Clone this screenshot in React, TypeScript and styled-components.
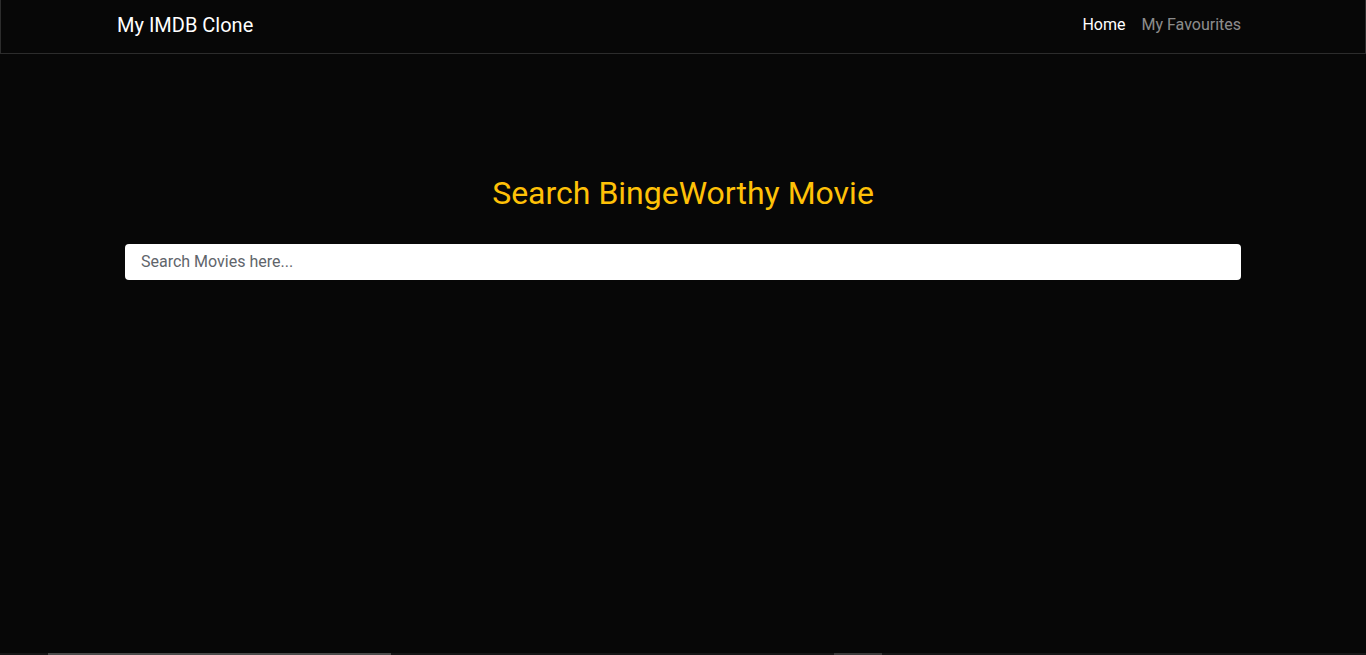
import React from "react";
import styled, { createGlobalStyle } from "styled-components";

const Global = createGlobalStyle`
  html, body { margin: 0; padding: 0; background: #070707; }
  body { font-family: Roboto, "Noto Sans", "Liberation Sans", sans-serif; color: #fff; }
  * { box-sizing: border-box; }
`;

const Page = styled.div`
  min-height: 655px;
  display: flex;
  flex-direction: column;
  background: #070707;
`;

const NavBar = styled.nav`
  height: 54px;
  border: 1px solid #2c2c2c;
  border-top: none;
  display: flex;
  align-items: center;
`;

const NavInner = styled.div`
  width: 1140px;
  margin: 0 auto;
  padding: 0 12px 4px 4px;
  display: flex;
  align-items: center;
  justify-content: space-between;
`;

const Brand = styled.a`
  font-size: 20px;
  color: #fff;
  text-decoration: none;
  line-height: 30px;
`;

const NavList = styled.div`
  display: flex;
  align-items: center;
  margin-right: -8px;
`;

const NavLink = styled.a<{ $active?: boolean }>`
  font-size: 16px;
  padding: 8px;
  line-height: 24px;
  color: ${(p) => (p.$active ? "#fff" : "rgba(255,255,255,0.55)")};
  text-decoration: none;
`;

const Main = styled.main`
  flex: 1;
  width: 1140px;
  margin: 0 auto;
  padding: 120px 12px 0;
  display: flex;
  flex-direction: column;
  align-items: center;
`;

const Title = styled.h1`
  margin: 0 0 32px;
  font-size: 32px;
  font-weight: 400;
  line-height: 1.2;
  color: #ffc107;
`;

const SearchInput = styled.input`
  width: 100%;
  height: 36px;
  border: none;
  border-radius: 4px;
  background: #fff;
  padding: 0 16px 1px;
  font-family: Roboto, "Noto Sans", sans-serif;
  font-size: 16px;
  color: #212529;
  outline: none;
  &::placeholder { color: #5f656b; }
`;

const Footer = styled.div`
  height: 2px;
  background: #161616;
  display: flex;
`;

const FooterSeg = styled.div<{ $w: number; $ml: number; $c: string }>`
  width: ${(p) => p.$w}px;
  margin-left: ${(p) => p.$ml}px;
  background: ${(p) => p.$c};
`;

export default function App() {
  return (
    <>
      <Global />
      <Page>
        <NavBar>
          <NavInner>
            <Brand href="#">My IMDB Clone</Brand>
            <NavList>
              <NavLink $active href="#">Home</NavLink>
              <NavLink href="#">My Favourites</NavLink>
            </NavList>
          </NavInner>
        </NavBar>
        <Main>
          <Title>Search BingeWorthy Movie</Title>
          <SearchInput placeholder="Search Movies here..." />
        </Main>
        <Footer>
          <FooterSeg $w={343} $ml={48} $c="#4a4a4a" />
          <FooterSeg $w={48} $ml={443} $c="#3a3a3a" />
        </Footer>
      </Page>
    </>
  );
}
